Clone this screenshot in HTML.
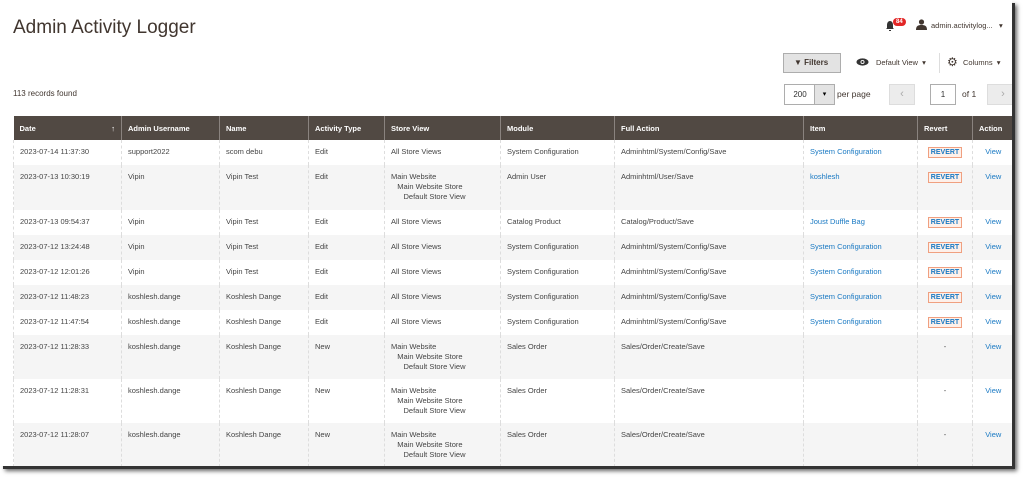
<!DOCTYPE html><html><head><style>
body{margin:0;width:1024px;height:477px;background:#fff;font-family:"Liberation Sans",sans-serif;overflow:hidden;position:relative}
#pg{position:absolute;left:0;top:0;width:1012px;height:466px;background:#fff;box-shadow:3px 3px 0 #333,5px 5px 4px #666;overflow:hidden}
h1{position:absolute;left:13px;top:17px;margin:0;font-weight:normal;font-size:19px;color:#41362f}
.a{position:absolute;font-size:8px;color:#41362f;white-space:nowrap}
table{position:absolute;left:13px;top:116px;border-collapse:collapse;table-layout:fixed;width:1000px}
th{background:#514943;color:#fff;font-size:7.5px;text-align:left;height:24px;padding:0 6px;border-left:1px solid #8a837f;font-weight:bold}
td{font-size:7.5px;color:#444;vertical-align:top;padding:7px 6px 0;border-left:1px dashed #ddd;line-height:10px}
tr.g td{background:#f5f5f5}
a{color:#1979c3;text-decoration:none}
.rv{display:inline-block;border:1px solid #f0a080;background:#fdf0ea;color:#1979c3;font-weight:bold;padding:1px 2px;line-height:7px;font-size:7px;margin-top:-1px}
.c{text-align:center}
.btn{position:absolute;border:1px solid #adadad;background:#e3e3e3}
.box{position:absolute;border:1px solid #adadad;background:#fff;font-size:8px;color:#303030;text-align:center}
</style></head><body><div id="pg">
<h1>Admin Activity Logger</h1>
<svg style="position:absolute;left:885px;top:20px" width="10" height="11"><path d="M5 1C3 1 2 3 2 5v3L1 9h8L8 8V5C8 3 7 1 5 1zM4 10h2v1H4z" fill="#333"/></svg>
<div style="position:absolute;left:893px;top:18px;background:#e22626;color:#fff;font-size:6px;border-radius:5px;padding:1px 3px;font-weight:bold">84</div>
<svg style="position:absolute;left:916px;top:19px" width="11" height="11"><circle cx="5.5" cy="3" r="2.6" fill="#41362f"/><path d="M0 11c0-4 2-5 5.5-5S11 7 11 11z" fill="#41362f"/></svg>
<div class="a" style="left:931px;top:21px;font-size:7.5px">admin.activitylog...&nbsp;&nbsp;&nbsp;▾</div>
<div class="btn" style="left:783px;top:53px;width:56px;height:18px"><span class="a" style="left:10px;top:4px;font-weight:bold">▼ Filters</span></div>
<svg style="position:absolute;left:856px;top:58px" width="13" height="8"><ellipse cx="6.5" cy="4" rx="6" ry="3.6" fill="#333"/><circle cx="6.5" cy="4" r="2" fill="#fff"/><circle cx="6.5" cy="4" r="1.1" fill="#333"/></svg>
<div class="a" style="left:876px;top:58px;font-size:7.5px">Default View &nbsp;▾</div>
<div style="position:absolute;left:939px;top:53px;width:1px;height:20px;background:#ddd"></div>
<div class="a" style="left:947px;top:55px;font-size:12px">⚙</div>
<div class="a" style="left:963px;top:58px;font-size:7.5px">Columns &nbsp;▾</div>
<div class="a" style="left:13px;top:89px">113 records found</div>
<div class="box" style="left:784px;top:84px;width:30px;height:19px;line-height:19px">200</div>
<div class="btn" style="left:814px;top:84px;width:19px;height:19px;font-size:7px;text-align:center;line-height:19px">▾</div>
<div class="a" style="left:837px;top:89px;font-size:8.5px">per page</div>
<div class="btn" style="left:889px;top:84px;width:24px;height:19px;background:#ececec;border-color:#ddd;color:#aaa;text-align:center;font-size:11px;line-height:18px">‹</div>
<div class="box" style="left:930px;top:84px;width:24px;height:19px;line-height:19px">1</div>
<div class="a" style="left:962px;top:89px;font-size:8.5px">of 1</div>
<div class="btn" style="left:987px;top:84px;width:30px;height:19px;background:#ececec;border-color:#ddd;color:#aaa;font-size:11px;line-height:18px;text-align:center">›</div>
<table>
<colgroup><col style="width:108px"><col style="width:98px"><col style="width:89px"><col style="width:76px"><col style="width:116px"><col style="width:114px"><col style="width:189px"><col style="width:114px"><col style="width:55px"><col style="width:41px"></colgroup>
<tr><th style="border-left:0">Date<span style="float:right">↑</span></th><th>Admin Username</th><th>Name</th><th>Activity Type</th><th>Store View</th><th>Module</th><th>Full Action</th><th>Item</th><th>Revert</th><th>Action</th></tr>
<tr style="height:25px"><td>2023-07-14 11:37:30</td><td>support2022</td><td>scom debu</td><td>Edit</td><td>All Store Views</td><td>System Configuration</td><td>Adminhtml/System/Config/Save</td><td><a>System Configuration</a></td><td class="c"><span class="rv">REVERT</span></td><td class="c"><a>View</a></td></tr>
<tr class="g" style="height:45px"><td>2023-07-13 10:30:19</td><td>Vipin</td><td>Vipin Test</td><td>Edit</td><td>Main Website<br>&nbsp;&nbsp;&nbsp;Main Website Store<br>&nbsp;&nbsp;&nbsp;&nbsp;&nbsp;&nbsp;Default Store View</td><td>Admin User</td><td>Adminhtml/User/Save</td><td><a>koshlesh</a></td><td class="c"><span class="rv">REVERT</span></td><td class="c"><a>View</a></td></tr>
<tr style="height:25px"><td>2023-07-13 09:54:37</td><td>Vipin</td><td>Vipin Test</td><td>Edit</td><td>All Store Views</td><td>Catalog Product</td><td>Catalog/Product/Save</td><td><a>Joust Duffle Bag</a></td><td class="c"><span class="rv">REVERT</span></td><td class="c"><a>View</a></td></tr>
<tr class="g" style="height:25px"><td>2023-07-12 13:24:48</td><td>Vipin</td><td>Vipin Test</td><td>Edit</td><td>All Store Views</td><td>System Configuration</td><td>Adminhtml/System/Config/Save</td><td><a>System Configuration</a></td><td class="c"><span class="rv">REVERT</span></td><td class="c"><a>View</a></td></tr>
<tr style="height:25px"><td>2023-07-12 12:01:26</td><td>Vipin</td><td>Vipin Test</td><td>Edit</td><td>All Store Views</td><td>System Configuration</td><td>Adminhtml/System/Config/Save</td><td><a>System Configuration</a></td><td class="c"><span class="rv">REVERT</span></td><td class="c"><a>View</a></td></tr>
<tr class="g" style="height:25px"><td>2023-07-12 11:48:23</td><td>koshlesh.dange</td><td>Koshlesh Dange</td><td>Edit</td><td>All Store Views</td><td>System Configuration</td><td>Adminhtml/System/Config/Save</td><td><a>System Configuration</a></td><td class="c"><span class="rv">REVERT</span></td><td class="c"><a>View</a></td></tr>
<tr style="height:25px"><td>2023-07-12 11:47:54</td><td>koshlesh.dange</td><td>Koshlesh Dange</td><td>Edit</td><td>All Store Views</td><td>System Configuration</td><td>Adminhtml/System/Config/Save</td><td><a>System Configuration</a></td><td class="c"><span class="rv">REVERT</span></td><td class="c"><a>View</a></td></tr>
<tr class="g" style="height:44px"><td>2023-07-12 11:28:33</td><td>koshlesh.dange</td><td>Koshlesh Dange</td><td>New</td><td>Main Website<br>&nbsp;&nbsp;&nbsp;Main Website Store<br>&nbsp;&nbsp;&nbsp;&nbsp;&nbsp;&nbsp;Default Store View</td><td>Sales Order</td><td>Sales/Order/Create/Save</td><td></td><td class="c">-</td><td class="c"><a>View</a></td></tr>
<tr style="height:44px"><td>2023-07-12 11:28:31</td><td>koshlesh.dange</td><td>Koshlesh Dange</td><td>New</td><td>Main Website<br>&nbsp;&nbsp;&nbsp;Main Website Store<br>&nbsp;&nbsp;&nbsp;&nbsp;&nbsp;&nbsp;Default Store View</td><td>Sales Order</td><td>Sales/Order/Create/Save</td><td></td><td class="c">-</td><td class="c"><a>View</a></td></tr>
<tr class="g" style="height:44px"><td>2023-07-12 11:28:07</td><td>koshlesh.dange</td><td>Koshlesh Dange</td><td>New</td><td>Main Website<br>&nbsp;&nbsp;&nbsp;Main Website Store<br>&nbsp;&nbsp;&nbsp;&nbsp;&nbsp;&nbsp;Default Store View</td><td>Sales Order</td><td>Sales/Order/Create/Save</td><td></td><td class="c">-</td><td class="c"><a>View</a></td></tr>
</table>
</div></body></html>
